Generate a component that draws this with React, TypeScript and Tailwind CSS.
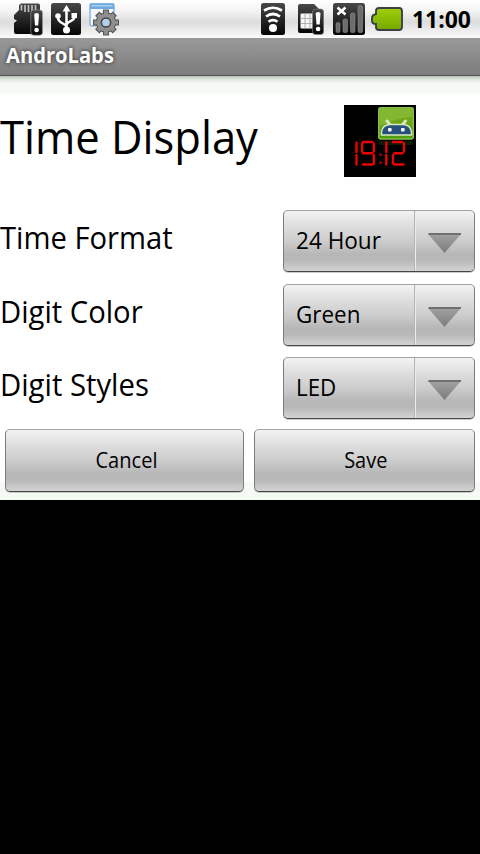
import React from 'react';
import { clsx } from 'clsx';

interface Setting {
  id: number;
  label: string;
  value: string;
  labelScale: string;
  valueScale: string;
}

const settings: Setting[] = [
  { id: 1, label: 'Time Format', value: '24 Hour', labelScale: 'scale-x-[0.941]', valueScale: 'scale-x-[0.94]' },
  { id: 2, label: 'Digit Color', value: 'Green', labelScale: 'scale-x-[0.942]', valueScale: 'scale-x-[0.935]' },
  { id: 3, label: 'Digit Styles', value: 'LED', labelScale: 'scale-x-[0.944]', valueScale: 'scale-x-[0.93]' },
];

// Shared gradients for the icons
const Defs = () => (
  <svg width="0" height="0" className="absolute">
    <defs>
      <linearGradient id="tile" x1="0" y1="0" x2="0" y2="1">
        <stop offset="0" stopColor="#484848" />
        <stop offset="0.6" stopColor="#202020" />
        <stop offset="1" stopColor="#050505" />
      </linearGradient>
      <linearGradient id="arrow" x1="0" y1="0" x2="0" y2="1">
        <stop offset="0" stopColor="#a2a2a2" />
        <stop offset="1" stopColor="#7c7c7c" />
      </linearGradient>
      <linearGradient id="green" x1="0" y1="0" x2="0" y2="1">
        <stop offset="0" stopColor="#a0cf0a" />
        <stop offset="1" stopColor="#74a800" />
      </linearGradient>
      <linearGradient id="badge" x1="0" y1="0" x2="0" y2="1">
        <stop offset="0" stopColor="#74a81c" />
        <stop offset="0.5" stopColor="#6ba814" />
        <stop offset="1" stopColor="#4d9a10" />
      </linearGradient>
    </defs>
  </svg>
);

const SdCardIcon = () => (
  <svg width="30" height="33" viewBox="0 0 30 33">
    <path d="M7 .5h17q2 0 2 2V29q0 2-2 2H2q-2 0-2-2v-9l3-2.500-3-1.500v-4l5-5V2z" fill="url(#tile)" />
    <path d="M7.500 2v5.500M11 2v7M14.500 2v7M18 2v7M21.500 2v5" stroke="#bdbdbd" strokeWidth="1.700" />
    <rect x="16.800" y="7" width="11.700" height="25.200" rx="3" fill="url(#tile)" stroke="#999" strokeWidth="0.600" />
    <path d="M20.200 11.500q0-1.500 2.400-1.500t2.400 1.500l-.8 11h-3.200z" fill="#fff" />
    <circle cx="22.600" cy="27" r="2.300" fill="#fff" />
  </svg>
);

const UsbIcon = () => (
  <svg width="30" height="32" viewBox="0 0 30 32">
    <rect width="30" height="32" rx="2.500" fill="url(#tile)" />
    <path d="M15.500 7v19M15.500 23.500c-2-4-8.500-3-8.500-9M15.500 21.500c2-4 8-3 8-8" fill="none" stroke="#fff" strokeWidth="2.500" />
    <path d="M15.500 2l4 6.500h-8z" fill="#fff" />
    <circle cx="7" cy="13" r="2.800" fill="#fff" />
    <rect x="20.500" y="10" width="5.500" height="5" fill="#fff" />
    <circle cx="15.500" cy="27" r="3.500" fill="#fff" />
  </svg>
);

const GearIcon = () => (
  <svg width="32" height="33" viewBox="0 0 32 33">
    <rect x="1" y="0.700" width="24" height="22" rx="1.500" fill="#f3f6fa" stroke="#85b4e2" strokeWidth="1.500" />
    <path d="M1 1h24v5H1z" fill="#6da8e0" />
    <path d="M2.500 2h21v1.500h-21z" fill="#a9cff2" />
    <g stroke="#555" strokeWidth="6">
      <path d="M17 6.500v26M4 19.500h26M8.200 10.700l17.600 17.600M25.800 10.700L8.200 28.300" />
    </g>
    <circle cx="17" cy="19.500" r="10.200" fill="#555" />
    <g stroke="#8c8c8c" strokeWidth="4">
      <path d="M17 7.500v24M5 19.500h24M9 11.500l16 16M25 11.500l-16 16" />
    </g>
    <circle cx="17" cy="19.500" r="9.200" fill="#8f8f8f" />
    <circle cx="17" cy="19.500" r="4.600" fill="#b3d0ea" stroke="#444" strokeWidth="1.500" />
  </svg>
);

const WifiIcon = () => (
  <svg width="24" height="32" viewBox="0 0 24 32">
    <rect width="24" height="32" rx="2.500" fill="url(#tile)" />
    <g fill="none" stroke="#fff" strokeWidth="2.700">
      <path d="M3 7.500q9-5.500 18 0" />
      <path d="M5 13.500q7-5 14 0" />
      <path d="M7.500 18.800q4.500-3.500 9 0" />
    </g>
    <circle cx="12" cy="25" r="4" fill="#fff" />
  </svg>
);

const SimIcon = () => (
  <svg width="26" height="32" viewBox="0 0 26 32">
    <path d="M2 1h14l7 7v20q0 2-2 2H2q-2 0-2-2V3q0-2 2-2z" fill="url(#tile)" />
    <rect x="2.500" y="10.500" width="15" height="15" rx="1" fill="#f5f5f5" />
    <path d="M2.500 15.500h15M2.500 20.500h15M7 10.500v15M12 10.500v15" stroke="#aaa" strokeWidth="0.900" />
    <rect x="14.500" y="6" width="11.200" height="25.500" rx="3" fill="url(#tile)" stroke="#888" strokeWidth="0.600" />
    <path d="M17.700 10.500q0-1.500 2.400-1.500t2.400 1.500l-.8 11h-3.200z" fill="#fff" />
    <circle cx="20.100" cy="26" r="2.300" fill="#fff" />
  </svg>
);

const SignalIcon = () => (
  <svg width="32" height="32" viewBox="0 0 32 32">
    <rect width="32" height="32" rx="2.500" fill="url(#tile)" />
    <path d="M4.500 4.500l8 7M12.500 4.500l-8 7" stroke="#fff" strokeWidth="2.600" />
    <g fill="#6c6c6c" stroke="#8e8e8e" strokeWidth="0.600">
      <rect x="3" y="19.500" width="4" height="10" rx="1.500" />
      <rect x="10" y="16" width="4.500" height="13.500" rx="1.500" />
      <rect x="17.500" y="10" width="4.500" height="19.500" rx="1.500" />
      <rect x="25" y="2.500" width="4.500" height="27" rx="1.500" />
    </g>
  </svg>
);

const BatteryIcon = () => (
  <svg width="32" height="24" viewBox="0 0 32 24">
    <path d="M8 1h20q3 0 3 3v16q0 3-3 3H8q-3 0-3-3v-3q-4 0-4-3v-3q0-3 4-4V4q0-3 3-3z" fill="url(#green)" stroke="#3c3f45" strokeWidth="1.900" />
  </svg>
);

// 72px preview of the clock widget with the app badge in the corner
const WidgetPreview = () => (
  <svg width="72" height="72" viewBox="0 0 72 72">
    <rect width="72" height="72" fill="#000" />
    <rect x="34.700" y="2.700" width="34.600" height="31.300" rx="2" fill="url(#badge)" stroke="#86c04c" strokeWidth="1.400" />
    <path d="M36 4h32v8q-16 1-32 9z" fill="#9cca50" opacity="0.450" />
    <path d="M43 16l4 5M61.500 16l-4 5" stroke="#d8e8c0" strokeWidth="3" strokeLinecap="round" />
    <path d="M37.500 30v-3q1-7.500 9-7.500h12q8 0 9 7.500v3z" fill="#28507c" stroke="#d8e8c0" strokeWidth="1.500" />
    <rect x="44" y="23" width="3.600" height="3.400" rx="1" fill="#fff" />
    <rect x="57" y="23" width="3.600" height="3.400" rx="1" fill="#fff" />
    <path d="M35 36h34v4H35z" fill="#0b1c05" />
    <g fill="none" stroke="#e80404" strokeWidth="2.400" strokeLinecap="round">
      <path d="M12.500 37.500v9.500M12.500 50v9.500" />
      <path d="M19 37h9M18 38.500v8M19 48.200h9M29.800 38.500v8M29.800 50v9M19 59.500h9" />
      <path d="M42.300 37.500v9.500M42.300 50v9.500" />
      <path d="M49 37h9M60 38.500v8M50.500 48.200h8M49 50v8.500M50.500 59.500h9" />
    </g>
    <path d="M35.500 48.500h2v2.500h-2zM35.500 56.500h2v2.500h-2z" fill="#c00606" />
  </svg>
);

const panel =
  'rounded-[5px] border border-t-[#a3a3a3] border-x-[#7c7c7c] border-b-[#454545] shadow-[0_1px_0_#9a9a9a80] bg-[linear-gradient(180deg,#f3f3f3_0%,#dedede_25%,#cbcbcb_52%,#b7b7b7_72%,#b8b8b8_82%,#d3d3d3_100%)]';

const Spinner: React.FC<{ value: string; scale: string }> = ({ value, scale }) => (
  <button className={clsx(panel, 'flex h-[62px] w-[192px] items-stretch text-left')}>
    <span className="flex w-[131px] items-center border-r border-[#b3b3b3] pb-[2px] pl-3 text-[24px] leading-none">
      <span className={clsx('origin-left whitespace-nowrap', scale)}>{value}</span>
    </span>
    <span className="flex flex-1 items-center border-l border-[#ededed] pl-[12px] pt-1">
      <svg width="34" height="20" viewBox="0 0 34 20">
        <path d="M0 1h33L16.500 20z" fill="url(#arrow)" />
        <path d="M.5 1h32.500" stroke="#707070" strokeWidth="1.800" />
      </svg>
    </span>
  </button>
);

export default function App() {
  return (
    <div className="flex h-[854px] w-[480px] flex-col overflow-hidden bg-black font-['Open_Sans','Noto_Sans',sans-serif] text-black">
      <Defs />

      {/* Status bar */}
      <div className="flex h-[38px] shrink-0 items-start bg-[linear-gradient(180deg,#fff_0%,#f3f3f3_30%,#dcdcdc_58%,#e8e8e8_75%,#fbfbfb_100%)] pl-[14px] pt-[3px]">
        <SdCardIcon />
        <div className="ml-[7px]"><UsbIcon /></div>
        <div className="ml-[8px]"><GearIcon /></div>
        <div className="ml-[140px]"><WifiIcon /></div>
        <div className="ml-[13px]"><SimIcon /></div>
        <div className="ml-[9px]"><SignalIcon /></div>
        <div className="ml-[6px] mt-[4px]"><BatteryIcon /></div>
        <span className="ml-[9px] mt-[4px] origin-left text-[24px] font-bold leading-[24px] scale-x-[0.955]">11:00</span>
      </div>

      {/* Title bar */}
      <div className="h-[38px] shrink-0 border-b border-[#555] bg-gradient-to-b from-[#999] to-[#7d7d7d] pl-[6px]">
        <span className="inline-block origin-left text-[21px] font-bold leading-[35px] text-white scale-x-[0.96] [text-shadow:0_0_4px_#444,0_0_4px_#555]">
          AndroLabs
        </span>
      </div>

      {/* Widget settings */}
      <div className="flex h-[424px] shrink-0 flex-col bg-[linear-gradient(180deg,#b9beb9_0px,#dfe4df_3px,#f4f8f4_7px,#f8fcf8_18px,#fff_19px,#fff_405px,#f5faf5_406px,#f5faf5_100%)]">
        <div className="flex h-[128px] items-start pt-[29px]">
          <h1 className="w-[344px] whitespace-nowrap text-[46px] leading-[62px]">
            <span className="inline-block origin-left scale-x-[0.946]">Time Display</span>
          </h1>
          <WidgetPreview />
        </div>

        <div className="flex flex-col gap-[11.500px] pt-[6px]">
          {settings.map((setting) => (
            <div key={setting.id} className="flex h-[62px] items-start justify-between pr-[5px]">
              <span className={clsx('origin-left whitespace-nowrap text-[31px] leading-[55px]', setting.labelScale)}>
                {setting.label}
              </span>
              <Spinner value={setting.value} scale={setting.valueScale} />
            </div>
          ))}
        </div>

        <div className="flex gap-[10px] px-[5px] pt-[10px] text-[21px]">
          <button className={clsx(panel, 'h-[63px] w-[239px] pl-[3px]')}>
            <span className="inline-block scale-x-[0.955]">Cancel</span>
          </button>
          <button className={clsx(panel, 'h-[63px] w-[221px] pl-[2px]')}>
            <span className="inline-block scale-x-[0.95]">Save</span>
          </button>
        </div>
      </div>
    </div>
  );
}
